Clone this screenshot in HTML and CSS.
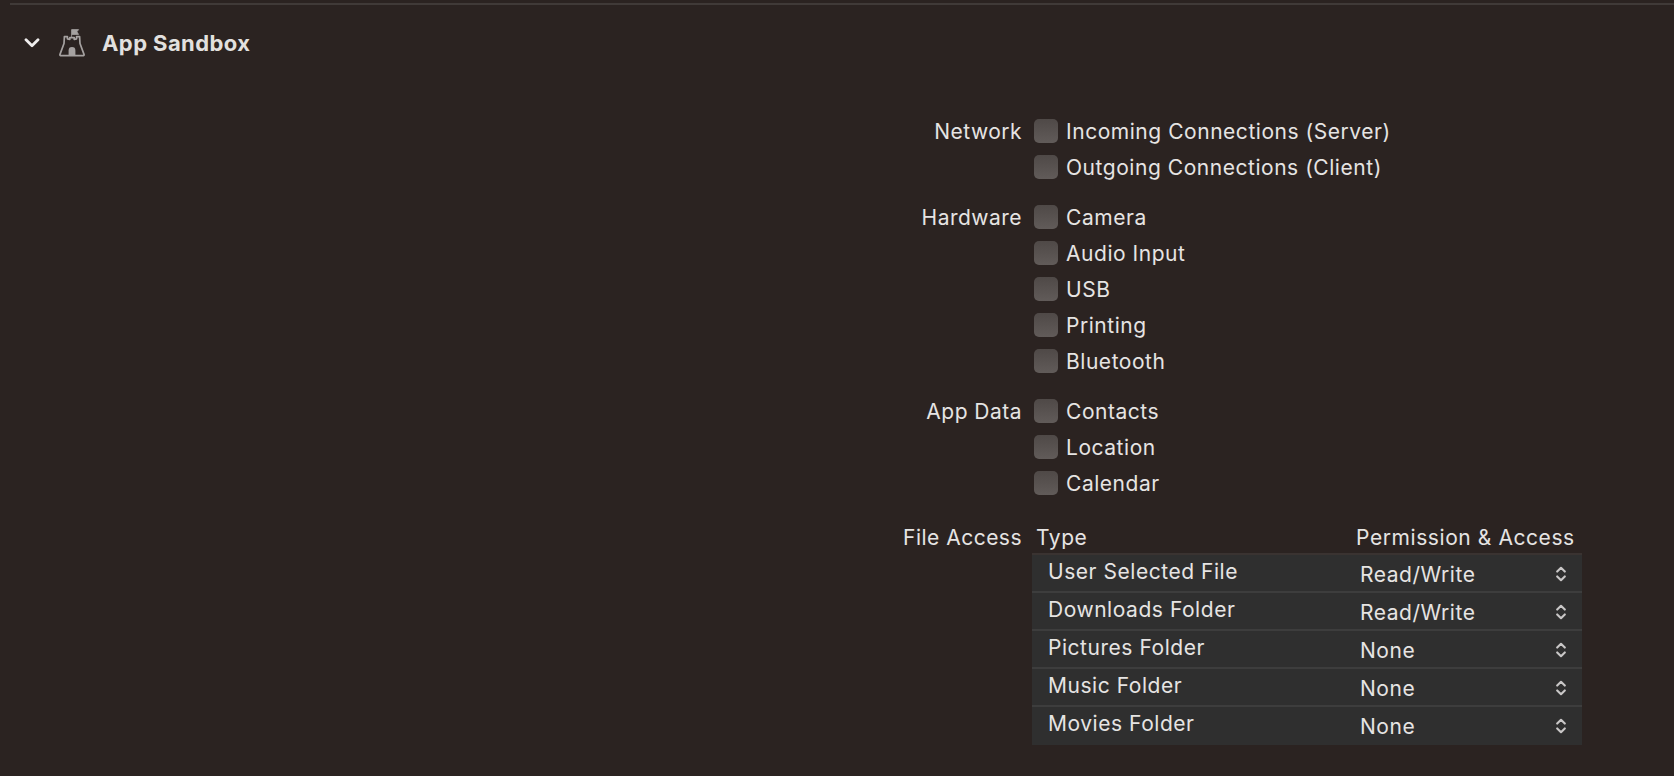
FILE: index.html
```html
<!DOCTYPE html>
<html lang="en">
<head>
<meta charset="utf-8">
<title>App Sandbox</title>
<link rel="stylesheet" href="styles.css">
</head>
<body>
<div class="topline"></div>
<header class="head">
  <svg class="chev" width="16" height="10" viewBox="0 0 16 10"><path d="M2 1.8 8 7.8 14 1.8" fill="none" stroke="#f0eeee" stroke-width="2.8" stroke-linecap="round" stroke-linejoin="round"/></svg>
  <svg class="castle" width="26" height="28" viewBox="0 0 26 28">
    <path d="M12.6 8V.6h7l-1.7 2.2 1.7 2.6h-7" fill="#a5a1a0" stroke="#a5a1a0" stroke-width=".8"/>
    <path d="M1.6 26.6h22.8a.8.8 0 0 0 .7-1L21 14.5 20.6 7.6h-3v2.2l-2.4.5V8.6H10.8v1.7l-2.4-.5V7.6h-3L5 14.5.9 25.6a.8.8 0 0 0 .7 1z" fill="none" stroke="#a5a1a0" stroke-width="1.7" stroke-linejoin="round"/>
    <path d="M9.6 27v-5.6a3.4 3.4 0 0 1 6.8 0V27z" fill="#a5a1a0"/>
  </svg>
  <h1 class="title">App Sandbox</h1>
</header>
<main class="form">
  <section class="group">
    <div class="label">Network</div>
    <div class="opts">
      <label class="opt"><span class="box"></span>Incoming Connections (Server)</label>
      <label class="opt"><span class="box"></span>Outgoing Connections (Client)</label>
    </div>
  </section>
  <section class="group">
    <div class="label">Hardware</div>
    <div class="opts">
      <label class="opt"><span class="box"></span>Camera</label>
      <label class="opt"><span class="box"></span>Audio Input</label>
      <label class="opt"><span class="box"></span>USB</label>
      <label class="opt"><span class="box"></span>Printing</label>
      <label class="opt"><span class="box"></span>Bluetooth</label>
    </div>
  </section>
  <section class="group">
    <div class="label">App Data</div>
    <div class="opts">
      <label class="opt"><span class="box"></span>Contacts</label>
      <label class="opt"><span class="box"></span>Location</label>
      <label class="opt"><span class="box"></span>Calendar</label>
    </div>
  </section>
  <section class="group files">
    <div class="label">File Access</div>
    <div class="tablewrap">
      <div class="thead"><span class="th-type">Type</span><span class="th-perm">Permission &amp; Access</span></div>
      <div class="table">
        <div class="row"><span class="name">User Selected File</span><span class="val">Read/Write</span><svg class="updown" width="10" height="16" viewBox="0 0 10 16"><path d="M1.2 5.6 5 1.8l3.8 3.8M1.2 10.4 5 14.2l3.8-3.8" fill="none" stroke="#c9c7c7" stroke-width="2.1" stroke-linecap="round" stroke-linejoin="round"/></svg></div>
        <div class="row"><span class="name">Downloads Folder</span><span class="val">Read/Write</span><svg class="updown" width="10" height="16" viewBox="0 0 10 16"><path d="M1.2 5.6 5 1.8l3.8 3.8M1.2 10.4 5 14.2l3.8-3.8" fill="none" stroke="#c9c7c7" stroke-width="2.1" stroke-linecap="round" stroke-linejoin="round"/></svg></div>
        <div class="row"><span class="name">Pictures Folder</span><span class="val">None</span><svg class="updown" width="10" height="16" viewBox="0 0 10 16"><path d="M1.2 5.6 5 1.8l3.8 3.8M1.2 10.4 5 14.2l3.8-3.8" fill="none" stroke="#c9c7c7" stroke-width="2.1" stroke-linecap="round" stroke-linejoin="round"/></svg></div>
        <div class="row"><span class="name">Music Folder</span><span class="val">None</span><svg class="updown" width="10" height="16" viewBox="0 0 10 16"><path d="M1.2 5.6 5 1.8l3.8 3.8M1.2 10.4 5 14.2l3.8-3.8" fill="none" stroke="#c9c7c7" stroke-width="2.1" stroke-linecap="round" stroke-linejoin="round"/></svg></div>
        <div class="row"><span class="name">Movies Folder</span><span class="val">None</span><svg class="updown" width="10" height="16" viewBox="0 0 10 16"><path d="M1.2 5.6 5 1.8l3.8 3.8M1.2 10.4 5 14.2l3.8-3.8" fill="none" stroke="#c9c7c7" stroke-width="2.1" stroke-linecap="round" stroke-linejoin="round"/></svg></div>
      </div>
    </div>
  </section>
</main>
</body>
</html>
```
FILE: styles.css
```css
html, body { margin: 0; height: 776px; overflow: hidden; }
body { background: #2b2321; color: #e6e4e3; font-family: Inter, "Liberation Sans", sans-serif; font-size: 21px; letter-spacing: .54px; padding-top: 3px; box-sizing: border-box; }
.topline { height: 2px; margin-left: 10px; background: #403a38; }
.head { display: flex; align-items: center; height: 76px; padding-left: 24px; }
.chev { margin-right: 19px; }
.castle { margin-right: 17px; }
.title { margin: 0; font-size: 22px; font-weight: 700; letter-spacing: .42px; color: #e2e0df; }
.form { display: flex; flex-direction: column; gap: 14px; padding-top: 32px; }
.group { display: flex; }
.label { width: 1022px; height: 36px; display: flex; align-items: center; justify-content: flex-end; flex: none; letter-spacing: .48px; }
.opts { display: flex; flex-direction: column; padding-left: 12px; }
.opt { display: flex; align-items: center; height: 36px; gap: 8px; }
.box { width: 24px; height: 24px; box-sizing: border-box; border-radius: 5px; background: linear-gradient(#4f4947, #615b59); flex: none; }
.files { margin-top: 6px; }
.files .label { height: 32px; padding-top: 1px; box-sizing: border-box; }
.tablewrap { padding-left: 10px; width: 550px; }
.thead { display: flex; align-items: center; height: 32px; padding-top: 1px; box-sizing: border-box; }
.th-type { width: 320px; padding-left: 4px; flex: none; }
.th-perm { letter-spacing: .58px; }
.table { border-top: 2px solid #3a3331; }
.row { display: flex; align-items: center; height: 36px; background: #2f2f2f; border-bottom: 2px solid #3d3d3d; padding: 0 16px; }
.row:last-child { border-bottom-color: #2f2f2f; }
.name { width: 312px; position: relative; top: -2px; }
.val { flex: 1; position: relative; top: 1px; }
.updown { flex: none; position: relative; top: 1px; }
```
